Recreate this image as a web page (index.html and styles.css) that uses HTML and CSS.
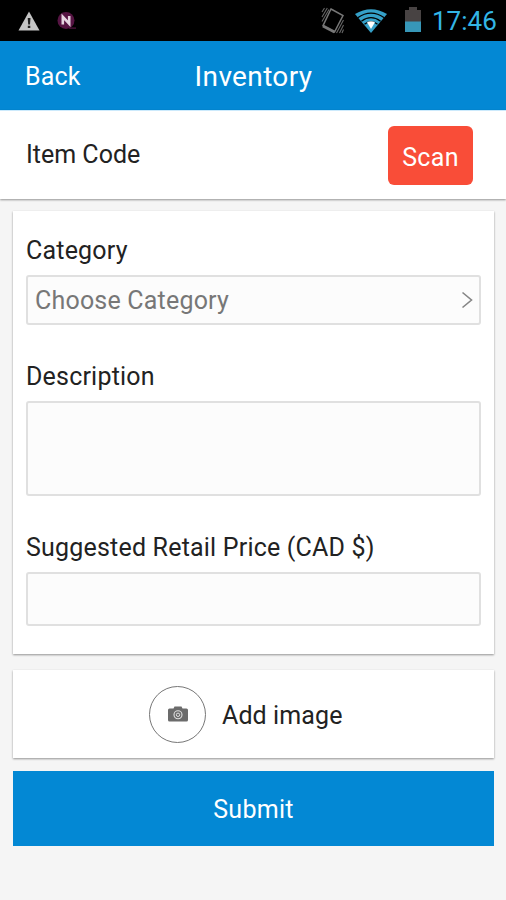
FILE: index.html
```
<!DOCTYPE html>
<html lang="en">
<head>
  <meta charset="utf-8">
  <meta name="viewport" content="width=device-width, initial-scale=1.0">
  <title>Inventory</title>
  <link rel="stylesheet" href="styles.css">
</head>
<body>
  <div class="status-bar">
    <svg class="icon-alert" width="22" height="20" viewBox="0 0 22 20">
      <path d="M11 0.5 L21.5 19.5 H0.5 Z" fill="#c4c4c4"/>
      <path d="M9.7 7 h2.8 l-0.5 6.5 h-1.8 Z M9.8 14.8 h2.5 v2.3 h-2.5 Z" fill="#222"/>
    </svg>
    <svg class="icon-app" width="20" height="20" viewBox="0 0 20 20">
      <circle cx="9" cy="9.5" r="8.5" fill="#561443"/>
      <path d="M12 16.5 h7 v1.2 h-7 Z" fill="#561443"/>
      <path d="M5.8 13.5 V5.8 L12.2 12.6 V5" fill="none" stroke="#e5d5e1" stroke-width="2.6"/>
    </svg>
    <span class="spacer"></span>
    <svg class="icon-vibrate" width="24" height="28" viewBox="0 0 24 28">
      <path d="M10 2 L22 8.5 L13.5 25 L2 18.8 Z" fill="none" stroke="#777" stroke-width="1.5"/>
      <path d="M2 19 L13.5 25" stroke="#777" stroke-width="3"/>
      <path d="M1 5 L3.5 1 M1 10 L6.3 1 M1 14.5 L8 2.5 M15.5 26 L22.5 13 M18.5 26 L22.5 18 M21 26 L22.5 22.5" stroke="#666" stroke-width="1.1"/>
    </svg>
    <svg class="icon-wifi" width="32" height="24" viewBox="0 0 32 24">
      <path d="M16 24 L0 5 Q16 -4.5 32 5 Z" fill="#35a0c8"/>
      <path d="M2.7 8.7 Q16 -0.5 29.3 8.7 M6.4 12.2 Q16 5 25.6 12.2 M9.5 15.2 Q16 10 22.5 15.2" fill="none" stroke="#000" stroke-width="1.3"/>
      <path d="M12 13.2 Q16 11.5 20 13.2 L16 20 Z" fill="#fff"/>
    </svg>
    <svg class="icon-battery" width="16" height="25" viewBox="0 0 16 25">
      <path d="M0 3 H4 V0 H12 V3 H16 V15 H0 Z" fill="#484343"/>
      <path d="M0 14.5 H16 V25 H0 Z" fill="#3797b8"/>
    </svg>
    <span class="clock">17:46</span>
  </div>

  <header class="header">
    <a class="back">Back</a>
    <h1 class="title">Inventory</h1>
  </header>

  <section class="item-row">
    <span class="item-code">Item Code</span>
    <button class="scan-btn" type="button">Scan</button>
  </section>

  <main class="content">
    <section class="card form">
      <label class="label">Category</label>
      <div class="field select">
        <span class="choose">Choose Category</span>
        <svg width="12" height="18" viewBox="0 0 12 18">
          <path d="M1.5 1.5 L10.5 9 L1.5 16.5" fill="none" stroke="#858585" stroke-width="1.6"/>
        </svg>
      </div>
      <label class="label">Description</label>
      <div class="field textarea"></div>
      <label class="label">Suggested Retail Price (CAD $)</label>
      <div class="field input"></div>
    </section>

    <section class="card add-image">
      <span class="camera">
        <svg width="20" height="16" viewBox="0 0 20 16">
          <path d="M1.5 2.5 H5.5 L6.5 0.5 H13.5 L14.5 2.5 H18.5 Q20 2.5 20 4 V14 Q20 15.5 18.5 15.5 H1.5 Q0 15.5 0 14 V4 Q0 2.5 1.5 2.5 Z" fill="#6b6b6b"/>
          <circle cx="10" cy="8.8" r="4" fill="none" stroke="#e0e0e0" stroke-width="1.1"/>
          <circle cx="10" cy="8.8" r="1.7" fill="none" stroke="#ddd" stroke-width="1"/>
        </svg>
      </span>
      <span class="add-text">Add image</span>
    </section>

    <button class="submit-btn" type="button">Submit</button>
  </main>
</body>
</html>
```

FILE: styles.css
```
* {
  box-sizing: border-box;
}
body {
  margin: 0;
  min-height: 900px;
  background-color: #f5f5f5;
  color: #222;
  font-family: Roboto, "Liberation Sans", sans-serif;
  font-size: 25px;
}
button {
  border: none;
  padding: 2px 0 0;
  color: #fff;
  font-family: inherit;
  font-size: 25px;
  letter-spacing: 0.3px;
}
.status-bar {
  display: flex;
  align-items: center;
  height: 41px;
  padding: 0 10px 0 18px;
  background-color: #000;
}
.icon-app {
  margin-left: 17px;
}
.spacer {
  flex: 1;
}
.icon-wifi {
  margin-left: 10px;
}
.icon-battery {
  margin: 0 11px 2px 18px;
}
.clock {
  width: 64px;
  color: #33b5e5;
  font-size: 26px;
  white-space: nowrap;
}
.header {
  display: grid;
  grid-template-columns: 1fr auto 1fr;
  align-items: center;
  height: 69px;
  padding: 2px 24px 0 25px;
  background-color: #0388d4;
  color: #fff;
}
.back {
  letter-spacing: 0.2px;
}
.title {
  margin: 0;
  font-size: 28px;
  font-weight: 400;
  letter-spacing: 0.35px;
}
.item-row {
  display: flex;
  align-items: center;
  justify-content: space-between;
  height: 89px;
  padding: 0 33px 0 26px;
  border-top: 1px solid #cceafc;
  background-color: #fff;
  box-shadow: 0 1px 2px rgba(0, 0, 0, 0.4);
}
.item-code {
  padding-bottom: 2px;
}
.scan-btn {
  width: 85px;
  height: 59px;
  padding-top: 4px;
  border-radius: 6px;
  background-color: #f94d38;
}
.content {
  padding: 12px 12px 0 13px;
}
.card {
  background-color: #fff;
  box-shadow: 0 1px 2px rgba(0, 0, 0, 0.4);
}
.form {
  height: 443px;
  padding: 23px 13px 0;
}
.label {
  display: block;
  height: 34px;
  margin-bottom: 7px;
  line-height: 34px;
  letter-spacing: 0.2px;
  white-space: nowrap;
}
.field {
  border: 2px solid #e0e0e0;
  border-radius: 3px;
  background-color: #fcfcfc;
}
.select {
  display: flex;
  align-items: center;
  justify-content: space-between;
  height: 50px;
  margin-bottom: 35px;
  padding: 0 6px 0 7px;
  color: #777;
  letter-spacing: 0.2px;
}
.textarea {
  height: 95px;
  margin-bottom: 35px;
}
.input {
  height: 54px;
}
.add-image {
  display: flex;
  align-items: center;
  height: 88px;
  margin-top: 16px;
  padding-left: 136px;
}
.camera {
  display: flex;
  align-items: center;
  justify-content: center;
  width: 57px;
  height: 57px;
  margin-right: 16px;
  border: 1.5px solid #777;
  border-radius: 50%;
}
.add-text {
  padding-top: 2px;
  letter-spacing: 0.1px;
}
.submit-btn {
  display: block;
  width: 100%;
  height: 75px;
  margin-top: 13px;
  background-color: #0388d4;
}
```
